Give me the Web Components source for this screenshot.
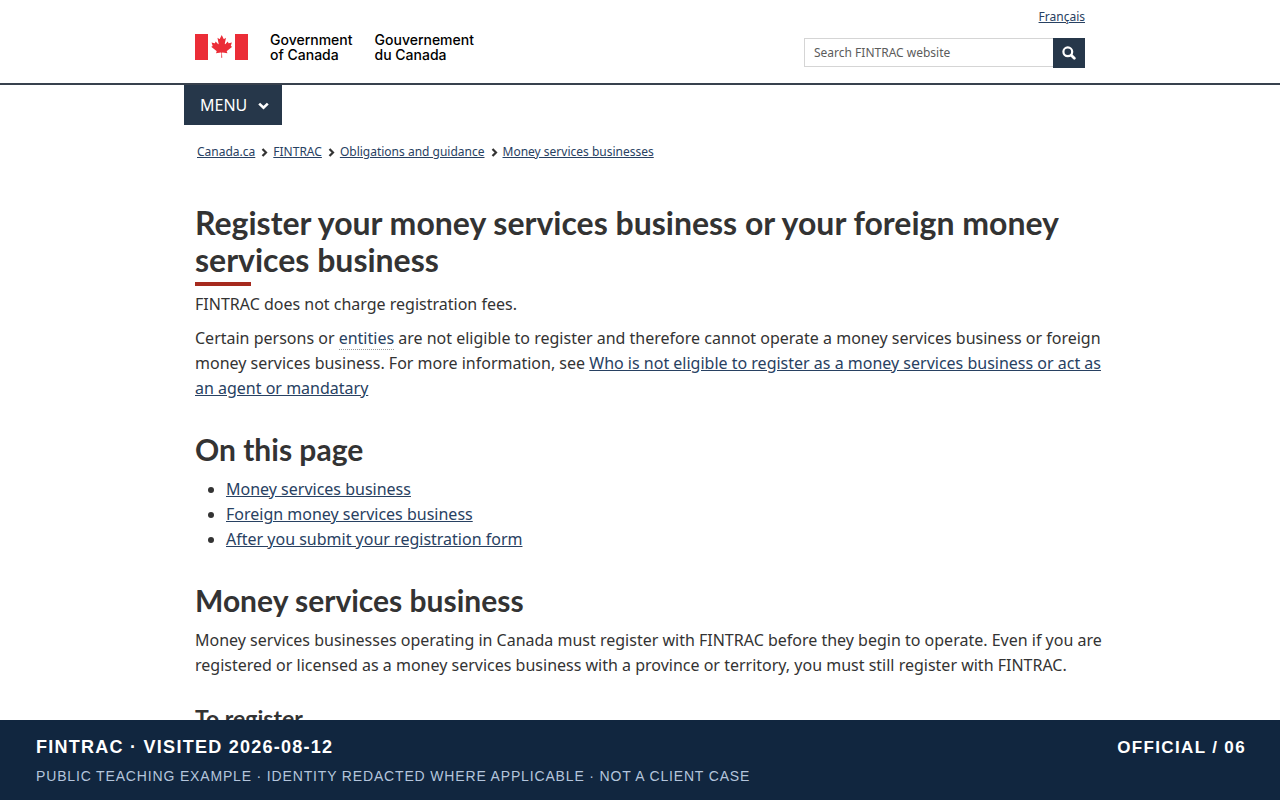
<!DOCTYPE html>
<html lang="en">
<head>
<meta charset="utf-8">
<meta name="viewport" content="width=device-width, initial-scale=1">
<title>Register your money services business or your foreign money services business</title>
<style>
  :root {
    --ink: #333333;
    --link: #284162;
    --navy: #26374a;
    --accent: #a62a1e;
    --measure: 890px;
  }
  body {
    margin: 0;
    background: #fff;
    color: var(--ink);
    font: 16px/25px "Noto Sans", sans-serif;
  }
</style>
</head>
<body>
<site-page>
  <site-header slot="header"></site-header>
  <site-menu slot="nav"></site-menu>
  <bread-crumbs slot="nav"></bread-crumbs>
  <page-article></page-article>
  <visit-banner slot="banner">
    <span slot="title">FINTRAC · VISITED 2026-08-12</span>
    <span slot="note">PUBLIC TEACHING EXAMPLE · IDENTITY REDACTED WHERE APPLICABLE · NOT A CLIENT CASE</span>
    <span slot="tag">OFFICIAL / 06</span>
  </visit-banner>
</site-page>

<script>
  function define(name, html, setup) {
    const template = document.createElement('template');
    template.innerHTML = html;
    customElements.define(name, class extends HTMLElement {
      constructor() {
        super();
        this.attachShadow({ mode: 'open' }).append(template.content.cloneNode(true));
        if (setup) setup(this.shadowRoot, this);
      }
    });
  }

  define('site-page', `
    <style>
      :host { display: block; padding-bottom: 64px; }
      .wrap { max-width: var(--measure); margin: 0 auto; padding: 0 16px; }
    </style>
    <slot name="header"></slot>
    <div class="wrap"><slot name="nav"></slot></div>
    <main class="wrap"><slot></slot></main>
    <slot name="banner"></slot>
  `);

  define('canada-wordmark', `
    <style>
      :host { display: flex; align-items: center; gap: 22px; color: #000; font: 500 14px/15px "Inter", "Liberation Sans", sans-serif; }
      svg { display: block; width: 53px; height: 26px; }
    </style>
    <svg viewBox="0 0 53 26" role="img" aria-label="Flag of Canada">
      <path fill="#eb2d37" d="M0 0h13v26H0zM40 0h13v26H40z"/>
      <path fill="#eb2d37" transform="translate(-.4 -1.2) scale(.00565)" d="m4890 4430-45-863a95 95 0 0 1 111-98l859 151-116-320a65 65 0 0 1 20-73l941-762-212-99a65 65 0 0 1-34-79l186-572-542 115a65 65 0 0 1-73-38l-105-247-423 454a65 65 0 0 1-111-57l204-1052-327 189a65 65 0 0 1-91-27l-332-652-332 652a65 65 0 0 1-91 27l-327-189 204 1052a65 65 0 0 1-111 57l-423-454-105 247a65 65 0 0 1-73 38l-542-115 186 572a65 65 0 0 1-34 79l-212 99 941 762a65 65 0 0 1 20 73l-116 320 859-151a95 95 0 0 1 111 98l-45 863z"/>
    </svg>
    <span>Government<br>of Canada</span>
    <span lang="fr">Gouvernement<br>du Canada</span>
  `);

  define('site-search', `
    <style>
      :host { display: block; }
      form { display: flex; align-items: flex-start; }
      input {
        box-sizing: border-box; width: 249px; height: 29px; margin: 0; padding: 0 9px;
        border: 1px solid #d5d5d5; border-right: 0; border-radius: 0; background: #fff;
        color: var(--ink); font: 12px/18px "Noto Sans", sans-serif;
      }
      input::placeholder { color: #5c5c5c; opacity: 1; }
      button {
        display: grid; place-items: center; width: 32px; height: 30px; padding: 0;
        border: 0; background: var(--navy); color: #fff;
      }
      svg { width: 14px; height: 14px; }
    </style>
    <form role="search">
      <input type="search" placeholder="Search FINTRAC website" aria-label="Search FINTRAC website">
      <button type="submit" aria-label="Search">
        <svg viewBox="0 0 14 14" fill="none" stroke="currentColor" aria-hidden="true">
          <circle cx="5.8" cy="5.8" r="4.4" stroke-width="2.2"/>
          <path d="m9.3 9.3 3 3" stroke-width="2.8" stroke-linecap="round"/>
        </svg>
      </button>
    </form>
  `);

  define('site-header', `
    <style>
      :host { display: block; border-bottom: 2px solid #38414d; }
      .row {
        display: flex; justify-content: space-between; align-items: flex-end;
        max-width: var(--measure); margin: 0 auto; padding: 8px 16px 15px;
      }
      canada-wordmark { margin-bottom: 6px; }
      .tools { display: flex; flex-direction: column; align-items: flex-end; gap: 12px; }
      a { color: var(--link); font-size: 12px; line-height: 18px; }
    </style>
    <header class="row">
      <canada-wordmark></canada-wordmark>
      <div class="tools">
        <a href="#fr" lang="fr">Français</a>
        <site-search></site-search>
      </div>
    </header>
  `);

  define('site-menu', `
    <style>
      :host { display: block; margin-left: -11px; }
      button {
        display: flex; align-items: center; gap: 11px; height: 40px; padding: 0 13px 0 16px;
        border: 0; background: var(--navy); color: #fff; font: 16px/24px "Noto Sans", sans-serif;
      }
      svg { width: 11px; height: 8px; padding-top: 2px; }
    </style>
    <nav aria-label="Menu">
      <button type="button" aria-haspopup="true">MENU
        <svg viewBox="0 0 11 8" fill="none" stroke="currentColor" stroke-width="2.6" aria-hidden="true"><path d="m1.2 1.6 4.3 4.2 4.3-4.2"/></svg>
      </button>
    </nav>
  `);

  define('bread-crumbs', `
    <style>
      :host { display: block; }
      ol { display: flex; flex-wrap: wrap; margin: 0; padding: 17px 2px 0; list-style: none; font-size: 12px; line-height: 20px; }
      li { display: flex; align-items: center; }
      a { color: var(--link); }
      svg { width: 7px; height: 9px; margin: 0 5px 0 6px; }
    </style>
    <nav aria-label="Breadcrumbs"><ol></ol></nav>
  `, root => {
    const crumbs = ['Canada.ca', 'FINTRAC', 'Obligations and guidance', 'Money services businesses'];
    const chevron = '<svg viewBox="0 0 7 9" fill="none" stroke="#333" stroke-width="2.2" aria-hidden="true"><path d="m1.5.9 3.500 3.600-3.500 3.600"/></svg>';
    root.querySelector('ol').innerHTML = crumbs
      .map((text, i) => `<li>${i ? chevron : ''}<a href="#crumb-${i}">${text}</a></li>`).join('');
  });

  define('page-article', `
    <style>
      :host { display: block; padding-top: 42px; margin-right: -20px; }
      h1, h2, h3 { margin: 0; font-family: Lato, sans-serif; font-weight: 700; }
      h1 { font-size: 32px; line-height: 37px; }
      h1::after { content: ""; display: block; width: 56px; height: 4px; margin-top: 4px; background: var(--accent); }
      h2 { margin-top: 31px; font-size: 30px; line-height: 34px; }
      h3 { margin-top: 26px; font-size: 23px; line-height: 28px; }
      p { margin: 9px 0 0; }
      h1 + p { margin-top: 6px; }
      h2 + p, ul { margin: 11px 0 0; }
      ul { padding-left: 31px; }
      a { color: var(--link); }
      a.term { text-decoration: none; border-bottom: 1px dotted #999; }
    </style>
    <article>
      <h1>Register your money services business or your foreign money services business</h1>
      <p>FINTRAC does not charge registration fees.</p>
      <p>Certain persons or <a class="term" href="#entities">entities</a> are not eligible to register and therefore cannot operate a money services business or foreign money services business. For more information, see <a href="#eligible">Who is not eligible to register as a money services business or act as an agent or mandatary</a></p>
      <h2>On this page</h2>
      <ul>
        <li><a href="#msb">Money services business</a></li>
        <li><a href="#fmsb">Foreign money services business</a></li>
        <li><a href="#after">After you submit your registration form</a></li>
      </ul>
      <h2 id="msb">Money services business</h2>
      <p>Money services businesses operating in Canada must register with FINTRAC before they begin to operate. Even if you are registered or licensed as a money services business with a province or territory, you must still register with FINTRAC.</p>
      <h3>To register</h3>
    </article>
  `);

  define('visit-banner', `
    <style>
      :host {
        position: fixed; inset: auto 0 0 0; box-sizing: border-box; min-height: 80px;
        display: flex; justify-content: space-between; gap: 24px; padding: 16px 34px 12px 36px;
        background: #11263f; color: #fff; font-family: "Liberation Sans", Arial, sans-serif;
      }
      .strong { font-size: 18px; line-height: 22px; font-weight: 700; letter-spacing: .07em; }
      .note { margin-top: 8px; color: #b4c5dc; font-size: 14px; line-height: 20px; letter-spacing: .06em; }
      .tag { font-size: 17px; line-height: 23px; letter-spacing: .08em; }
    </style>
    <div>
      <div class="strong"><slot name="title"></slot></div>
      <div class="note"><slot name="note"></slot></div>
    </div>
    <div class="strong tag"><slot name="tag"></slot></div>
  `);
</script>
</body>
</html>
